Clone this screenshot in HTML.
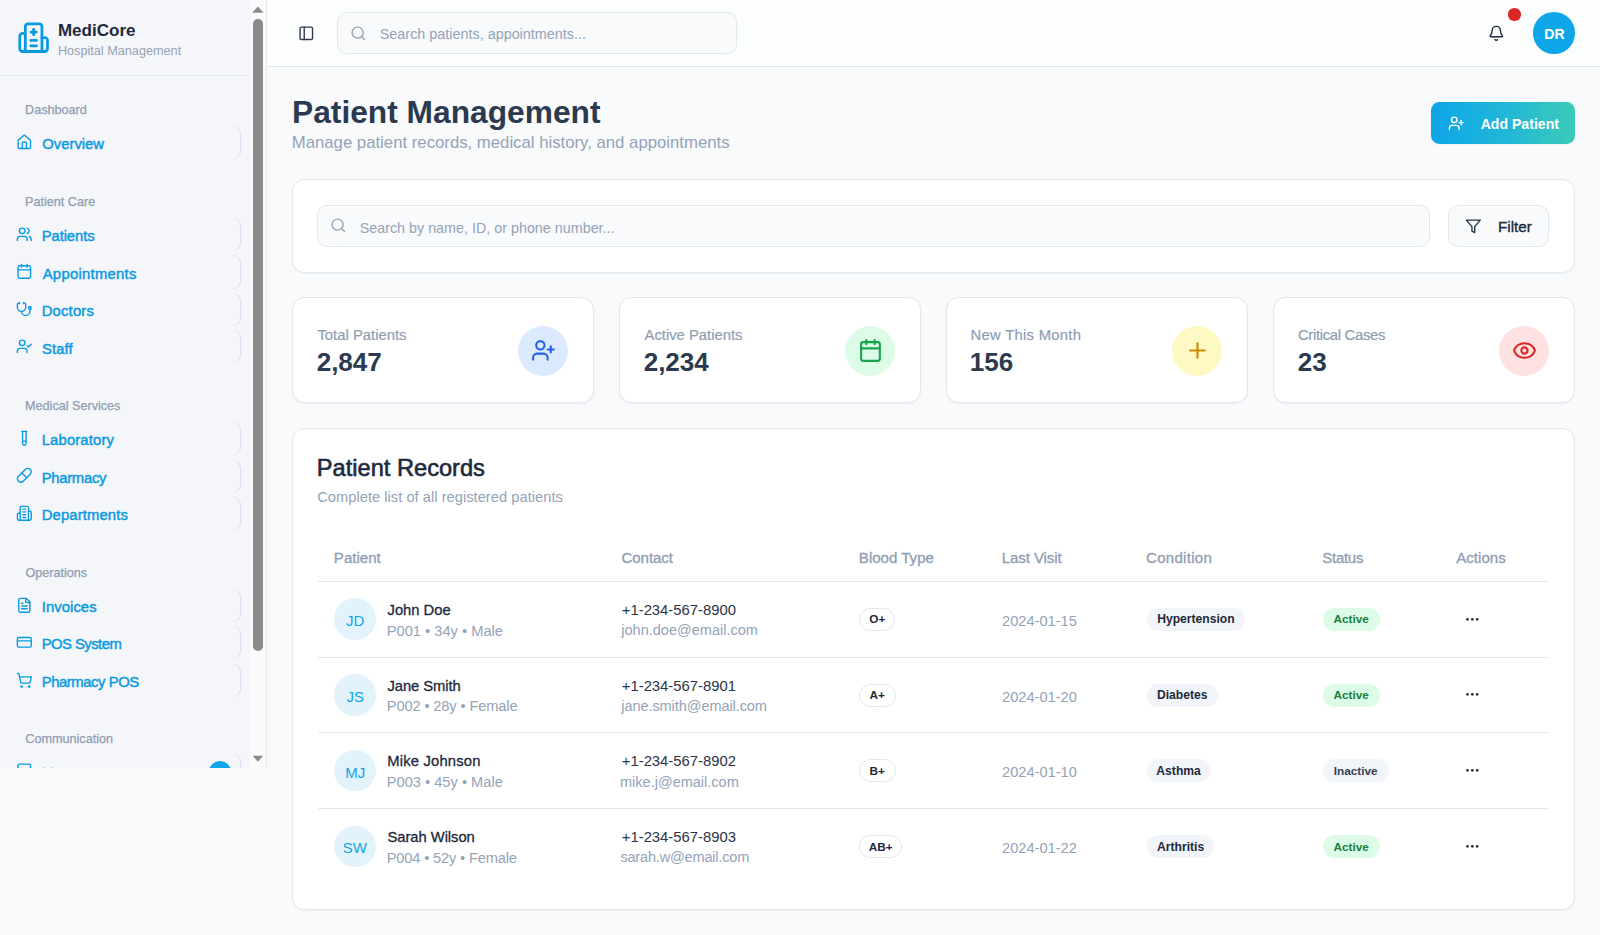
<!DOCTYPE html><html><head><meta charset="utf-8"><title>MediCore - Patient Management</title><style>
html,body{margin:0;padding:0}body{width:1600px;height:935px;overflow:hidden;position:relative;background:#f8fafc;font-family:'Liberation Sans',sans-serif}
.t{position:absolute;line-height:1;white-space:nowrap;font-family:'Liberation Sans',sans-serif}
</style></head><body>
<div style="position:absolute;left:0.00px;top:0.00px;width:250.00px;height:768.00px;background:#f5f6fa"></div>
<div style="position:absolute;left:250.00px;top:0.00px;width:16.00px;height:768.00px;background:#fafafa"></div>
<div style="position:absolute;left:266.00px;top:0.00px;width:1.04px;height:768.00px;background:#e2e8f0"></div>
<div style="position:absolute;left:0.00px;top:75.00px;width:250.00px;height:1.04px;background:#e2e8f0"></div>
<div style="position:absolute;left:253.00px;top:18.90px;width:9.70px;height:632.00px;background:#8a8a8a;border-radius:4.85px"></div>
<svg style="position:absolute;left:0;top:0" width="270" height="770"><polygon points="252.2,12.7 263.5,12.7 257.85,6.5" fill="#8a8a8a"/><polygon points="252.6,755.8 263.2,755.8 257.9,761.7" fill="#8a8a8a"/></svg>
<svg style="position:absolute;left:16.60px;top:20.50px" width="33.28" height="33.28" viewBox="0 0 24 24" fill="none" stroke="#0a9ae0" stroke-width="2" stroke-linecap="round" stroke-linejoin="round"><path d="M12 6v4"/><path d="M14 14h-4"/><path d="M14 18h-4"/><path d="M14 8h-4"/><path d="M18 12h2a2 2 0 0 1 2 2v6a2 2 0 0 1-2 2H4a2 2 0 0 1-2-2v-9a2 2 0 0 1 2-2h2"/><path d="M18 22V4a2 2 0 0 0-2-2H8a2 2 0 0 0-2 2v18"/></svg>
<span class="t" style="left:57.940px;top:22.000px;font-size:17.025px;font-weight:700;color:#1e293b;">MediCore</span>
<span class="t" style="left:57.917px;top:45.000px;font-size:12.686px;font-weight:400;color:#94a3b8;">Hospital Management</span>
<div style="position:absolute;left:0;top:0;width:250px;height:768px;overflow:hidden">
<span class="t" style="left:25.018px;top:104.000px;font-size:12.632px;font-weight:400;color:#8f9db2;-webkit-text-stroke:0.25px #8f9db2;">Dashboard</span>
<span class="t" style="left:25.018px;top:196.000px;font-size:12.632px;font-weight:400;color:#8f9db2;-webkit-text-stroke:0.25px #8f9db2;">Patient Care</span>
<span class="t" style="left:25.018px;top:400.000px;font-size:12.632px;font-weight:400;color:#8f9db2;-webkit-text-stroke:0.25px #8f9db2;">Medical Services</span>
<span class="t" style="left:25.410px;top:567.000px;font-size:12.632px;font-weight:400;color:#8f9db2;-webkit-text-stroke:0.25px #8f9db2;">Operations</span>
<span class="t" style="left:25.311px;top:733.000px;font-size:12.632px;font-weight:400;color:#8f9db2;-webkit-text-stroke:0.25px #8f9db2;">Communication</span>
<div style="position:absolute;left:-40px;top:126.15px;width:280.2px;height:33.1px;border-radius:8.5px;box-shadow:1.2px 0 0 #dbe2ea;"></div>
<svg style="position:absolute;left:16.40px;top:134.10px" width="16.64" height="16.64" viewBox="0 0 24 24" fill="none" stroke="#0a9ae0" stroke-width="2" stroke-linecap="round" stroke-linejoin="round"><path d="M15 21v-8a1 1 0 0 0-1-1h-4a1 1 0 0 0-1 1v8"/><path d="M3 10a2 2 0 0 1 .709-1.528l7-5.999a2 2 0 0 1 2.582 0l7 5.999A2 2 0 0 1 21 10v9a2 2 0 0 1-2 2H5a2 2 0 0 1-2-2z"/></svg>
<span class="t" style="left:42.254px;top:137.000px;font-size:14.847px;font-weight:400;color:#0a9ae0;-webkit-text-stroke:0.45px #0a9ae0;">Overview</span>
<div style="position:absolute;left:-40px;top:218.05px;width:280.2px;height:33.1px;border-radius:8.5px;box-shadow:1.2px 0 0 #dbe2ea;"></div>
<svg style="position:absolute;left:16.40px;top:226.00px" width="16.64" height="16.64" viewBox="0 0 24 24" fill="none" stroke="#0a9ae0" stroke-width="2" stroke-linecap="round" stroke-linejoin="round"><path d="M16 21v-2a4 4 0 0 0-4-4H6a4 4 0 0 0-4 4v2"/><circle cx="9" cy="7" r="4"/><path d="M22 21v-2a4 4 0 0 0-3-3.87"/><path d="M16 3.13a4 4 0 0 1 0 7.75"/></svg>
<span class="t" style="left:41.688px;top:229.000px;font-size:14.847px;font-weight:400;color:#0a9ae0;letter-spacing:-0.094px;-webkit-text-stroke:0.45px #0a9ae0;">Patients</span>
<div style="position:absolute;left:-40px;top:255.45px;width:280.2px;height:33.1px;border-radius:8.5px;box-shadow:1.2px 0 0 #dbe2ea;"></div>
<svg style="position:absolute;left:16.40px;top:263.40px" width="16.64" height="16.64" viewBox="0 0 24 24" fill="none" stroke="#0a9ae0" stroke-width="2" stroke-linecap="round" stroke-linejoin="round"><path d="M8 2v4"/><path d="M16 2v4"/><rect width="18" height="18" x="3" y="4" rx="2"/><path d="M3 10h18"/></svg>
<span class="t" style="left:42.700px;top:267.000px;font-size:14.847px;font-weight:400;color:#0a9ae0;letter-spacing:0.278px;-webkit-text-stroke:0.45px #0a9ae0;">Appointments</span>
<div style="position:absolute;left:-40px;top:292.85px;width:280.2px;height:33.1px;border-radius:8.5px;box-shadow:1.2px 0 0 #dbe2ea;"></div>
<svg style="position:absolute;left:16.40px;top:300.80px" width="16.64" height="16.64" viewBox="0 0 24 24" fill="none" stroke="#0a9ae0" stroke-width="2" stroke-linecap="round" stroke-linejoin="round"><path d="M11 2v2"/><path d="M5 2v2"/><path d="M5 3H4a2 2 0 0 0-2 2v4a6 6 0 0 0 12 0V5a2 2 0 0 0-2-2h-1"/><path d="M8 15a6 6 0 0 0 12 0v-3"/><circle cx="20" cy="10" r="2"/></svg>
<span class="t" style="left:41.680px;top:304.000px;font-size:14.847px;font-weight:400;color:#0a9ae0;letter-spacing:0.192px;-webkit-text-stroke:0.45px #0a9ae0;">Doctors</span>
<div style="position:absolute;left:-40px;top:330.25px;width:280.2px;height:33.1px;border-radius:8.5px;box-shadow:1.2px 0 0 #dbe2ea;"></div>
<svg style="position:absolute;left:16.40px;top:338.20px" width="16.64" height="16.64" viewBox="0 0 24 24" fill="none" stroke="#0a9ae0" stroke-width="2" stroke-linecap="round" stroke-linejoin="round"><path d="M16 21v-2a4 4 0 0 0-4-4H6a4 4 0 0 0-4 4v2"/><circle cx="9" cy="7" r="4"/><polyline points="16 11 18 13 22 9"/></svg>
<span class="t" style="left:42.089px;top:342.000px;font-size:14.847px;font-weight:400;color:#0a9ae0;letter-spacing:0.08px;-webkit-text-stroke:0.45px #0a9ae0;">Staff</span>
<div style="position:absolute;left:-40px;top:422.10px;width:280.2px;height:33.1px;border-radius:8.5px;box-shadow:1.2px 0 0 #dbe2ea;"></div>
<svg style="position:absolute;left:16.40px;top:430.05px" width="16.64" height="16.64" viewBox="0 0 24 24" fill="none" stroke="#0a9ae0" stroke-width="2" stroke-linecap="round" stroke-linejoin="round"><path d="M14.5 2v17.5c0 1.4-1.1 2.5-2.5 2.5c-1.4 0-2.5-1.1-2.5-2.5V2"/><path d="M8.5 2h7"/><path d="M14.5 16h-5"/></svg>
<span class="t" style="left:41.704px;top:433.000px;font-size:14.847px;font-weight:400;color:#0a9ae0;letter-spacing:0.149px;-webkit-text-stroke:0.45px #0a9ae0;">Laboratory</span>
<div style="position:absolute;left:-40px;top:459.50px;width:280.2px;height:33.1px;border-radius:8.5px;box-shadow:1.2px 0 0 #dbe2ea;"></div>
<svg style="position:absolute;left:16.40px;top:467.45px" width="16.64" height="16.64" viewBox="0 0 24 24" fill="none" stroke="#0a9ae0" stroke-width="2" stroke-linecap="round" stroke-linejoin="round"><path d="m10.5 20.5 10-10a4.95 4.95 0 1 0-7-7l-10 10a4.95 4.95 0 1 0 7 7Z"/><path d="m8.5 8.5 7 7"/></svg>
<span class="t" style="left:41.688px;top:471.000px;font-size:14.847px;font-weight:400;color:#0a9ae0;letter-spacing:-0.287px;-webkit-text-stroke:0.45px #0a9ae0;">Pharmacy</span>
<div style="position:absolute;left:-40px;top:496.90px;width:280.2px;height:33.1px;border-radius:8.5px;box-shadow:1.2px 0 0 #dbe2ea;"></div>
<svg style="position:absolute;left:16.40px;top:504.85px" width="16.64" height="16.64" viewBox="0 0 24 24" fill="none" stroke="#0a9ae0" stroke-width="2" stroke-linecap="round" stroke-linejoin="round"><path d="M6 22V4a2 2 0 0 1 2-2h8a2 2 0 0 1 2 2v18Z"/><path d="M6 12H4a2 2 0 0 0-2 2v6a2 2 0 0 0 2 2h2"/><path d="M18 9h2a2 2 0 0 1 2 2v9a2 2 0 0 1-2 2h-2"/><path d="M10 6h4"/><path d="M10 10h4"/><path d="M10 14h4"/><path d="M10 18h4"/></svg>
<span class="t" style="left:41.680px;top:508.000px;font-size:14.847px;font-weight:400;color:#0a9ae0;letter-spacing:0.129px;-webkit-text-stroke:0.45px #0a9ae0;">Departments</span>
<div style="position:absolute;left:-40px;top:588.75px;width:280.2px;height:33.1px;border-radius:8.5px;box-shadow:1.2px 0 0 #dbe2ea;"></div>
<svg style="position:absolute;left:16.40px;top:596.70px" width="16.64" height="16.64" viewBox="0 0 24 24" fill="none" stroke="#0a9ae0" stroke-width="2" stroke-linecap="round" stroke-linejoin="round"><path d="M15 2H6a2 2 0 0 0-2 2v16a2 2 0 0 0 2 2h12a2 2 0 0 0 2-2V7Z"/><path d="M14 2v4a2 2 0 0 0 2 2h4"/><path d="M10 9H8"/><path d="M16 13H8"/><path d="M16 17H8"/></svg>
<span class="t" style="left:41.864px;top:600.000px;font-size:14.847px;font-weight:400;color:#0a9ae0;letter-spacing:0.042px;-webkit-text-stroke:0.45px #0a9ae0;">Invoices</span>
<div style="position:absolute;left:-40px;top:626.15px;width:280.2px;height:33.1px;border-radius:8.5px;box-shadow:1.2px 0 0 #dbe2ea;"></div>
<svg style="position:absolute;left:16.40px;top:634.10px" width="16.64" height="16.64" viewBox="0 0 24 24" fill="none" stroke="#0a9ae0" stroke-width="2" stroke-linecap="round" stroke-linejoin="round"><rect width="20" height="14" x="2" y="5" rx="2"/><line x1="2" x2="22" y1="10" y2="10"/></svg>
<span class="t" style="left:41.688px;top:637.000px;font-size:14.847px;font-weight:400;color:#0a9ae0;letter-spacing:-0.533px;-webkit-text-stroke:0.45px #0a9ae0;">POS System</span>
<div style="position:absolute;left:-40px;top:663.55px;width:280.2px;height:33.1px;border-radius:8.5px;box-shadow:1.2px 0 0 #dbe2ea;"></div>
<svg style="position:absolute;left:16.40px;top:671.50px" width="16.64" height="16.64" viewBox="0 0 24 24" fill="none" stroke="#0a9ae0" stroke-width="2" stroke-linecap="round" stroke-linejoin="round"><circle cx="8" cy="21" r="1"/><circle cx="19" cy="21" r="1"/><path d="M2.05 2.05h2l2.66 12.42a2 2 0 0 0 2 1.58h9.78a2 2 0 0 0 1.95-1.57l1.65-7.43H5.12"/></svg>
<span class="t" style="left:41.688px;top:675.000px;font-size:14.847px;font-weight:400;color:#0a9ae0;letter-spacing:-0.425px;-webkit-text-stroke:0.45px #0a9ae0;">Pharmacy POS</span>
<div style="position:absolute;left:-40px;top:754.20px;width:280.2px;height:33.1px;border-radius:8.5px;box-shadow:1.2px 0 0 #dbe2ea;"></div>
<svg style="position:absolute;left:16.40px;top:762.15px" width="16.64" height="16.64" viewBox="0 0 24 24" fill="none" stroke="#0a9ae0" stroke-width="2" stroke-linecap="round" stroke-linejoin="round"><path d="M21 15a2 2 0 0 1-2 2H7l-4 4V5a2 2 0 0 1 2-2h14a2 2 0 0 1 2 2z"/></svg>
<span class="t" style="left:41.688px;top:766.000px;font-size:14.847px;font-weight:400;color:#0a9ae0;-webkit-text-stroke:0.45px #0a9ae0;">Messages</span>
<div style="position:absolute;left:208.7px;top:760.60px;width:22px;height:22px;border-radius:11px;background:#0ea5e9"></div>
</div>
<div style="position:absolute;left:267.04px;top:0.00px;width:1332.96px;height:66.00px;background:#fcfdfd"></div>
<div style="position:absolute;left:267.04px;top:66.00px;width:1332.96px;height:1.04px;background:#e2e8f0"></div>
<svg style="position:absolute;left:298.20px;top:25.06px" width="16.64" height="16.64" viewBox="0 0 24 24" fill="none" stroke="#2f3b4f" stroke-width="2" stroke-linecap="round" stroke-linejoin="round"><rect width="18" height="18" x="3" y="3" rx="2"/><path d="M9 3v18"/></svg>
<div style="position:absolute;left:336.90px;top:12.48px;width:400.40px;height:41.60px;box-sizing:border-box;background:#f8fafc;border:1.04px solid #e2e8f0;border-radius:10px"></div>
<svg style="position:absolute;left:350.20px;top:24.80px" width="16.64" height="16.64" viewBox="0 0 24 24" fill="none" stroke="#94a3b8" stroke-width="2" stroke-linecap="round" stroke-linejoin="round"><circle cx="11" cy="11" r="8"/><path d="m21 21-4.3-4.3"/></svg>
<span class="t" style="left:379.773px;top:27.000px;font-size:14.398px;font-weight:400;color:#94a3b8;">Search patients, appointments...</span>
<svg style="position:absolute;left:1487.50px;top:25.16px" width="16.64" height="16.64" viewBox="0 0 24 24" fill="none" stroke="#1e293b" stroke-width="2" stroke-linecap="round" stroke-linejoin="round"><path d="M10.268 21a2 2 0 0 0 3.464 0"/><path d="M3.262 15.326A1 1 0 0 0 4 17h16a1 1 0 0 0 .74-1.673C19.41 13.956 18 12.499 18 8A6 6 0 0 0 6 8c0 4.499-1.411 5.956-2.738 7.326"/></svg>
<div style="position:absolute;left:1508.25px;top:8.2px;width:12.48px;height:12.48px;border-radius:50%;background:#dc2626"></div>
<div style="position:absolute;left:1533.4px;top:12.4px;width:41.6px;height:41.6px;border-radius:50%;background:#0ea5e9"></div>
<span class="t" style="left:1544.321px;top:27.000px;font-size:14.033px;font-weight:700;color:#ffffff;">DR</span>
<span class="t" style="left:292.044px;top:97.000px;font-size:31.732px;font-weight:700;color:#2c3a4f;">Patient Management</span>
<span class="t" style="left:291.744px;top:135.000px;font-size:16.744px;font-weight:400;color:#94a3b8;">Manage patient records, medical history, and appointments</span>
<div style="position:absolute;left:1430.60px;top:102.40px;width:144.44px;height:41.60px;background:linear-gradient(90deg,#0ea5e9 0%,#22b8d6 55%,#3ccbb8 100%);border-radius:8.32px;box-shadow:0 1px 2px rgba(0,0,0,.05)"></div>
<svg style="position:absolute;left:1447.50px;top:115.20px" width="16.64" height="16.64" viewBox="0 0 24 24" fill="none" stroke="#ffffff" stroke-width="2" stroke-linecap="round" stroke-linejoin="round"><path d="M16 21v-2a4 4 0 0 0-4-4H6a4 4 0 0 0-4 4v2"/><circle cx="9" cy="7" r="4"/><line x1="19" x2="19" y1="8" y2="14"/><line x1="22" x2="16" y1="11" y2="11"/></svg>
<span class="t" style="left:1480.713px;top:117.000px;font-size:14.09px;font-weight:700;color:#ffffff;">Add Patient</span>
<div style="position:absolute;left:291.60px;top:179.00px;width:1283.44px;height:94.00px;box-sizing:border-box;background:#fff;border:1.04px solid #e2e8f0;border-radius:12.48px;box-shadow:0 1px 2px 0 rgba(0,0,0,.05)"></div>
<div style="position:absolute;left:317.20px;top:205.30px;width:1113.10px;height:41.60px;box-sizing:border-box;background:#f8fafc;border:1.04px solid #e2e8f0;border-radius:10px"></div>
<svg style="position:absolute;left:329.50px;top:217.10px" width="16.64" height="16.64" viewBox="0 0 24 24" fill="none" stroke="#94a3b8" stroke-width="2" stroke-linecap="round" stroke-linejoin="round"><circle cx="11" cy="11" r="8"/><path d="m21 21-4.3-4.3"/></svg>
<span class="t" style="left:359.657px;top:221.000px;font-size:14.347px;font-weight:400;color:#94a3b8;">Search by name, ID, or phone number...</span>
<div style="position:absolute;left:1447.60px;top:205.30px;width:101.00px;height:41.60px;box-sizing:border-box;background:#f8fafc;border:1.04px solid #e2e8f0;border-radius:10px"></div>
<svg style="position:absolute;left:1465.30px;top:218.20px" width="16.64" height="16.64" viewBox="0 0 24 24" fill="none" stroke="#283548" stroke-width="2" stroke-linecap="round" stroke-linejoin="round"><polygon points="22 3 2 3 10 12.46 10 19 14 21 14 12.46 22 3"/></svg>
<span class="t" style="left:1498.024px;top:219.000px;font-size:15.217px;font-weight:400;color:#1e293b;-webkit-text-stroke:0.35px #1e293b;">Filter</span>
<div style="position:absolute;left:291.60px;top:297.40px;width:302.24px;height:105.70px;box-sizing:border-box;background:#fff;border:1.04px solid #e2e8f0;border-radius:12.48px;box-shadow:0 1px 2px 0 rgba(0,0,0,.05)"></div>
<span class="t" style="left:317.442px;top:328.000px;font-size:14.833px;font-weight:400;color:#8f9db2;-webkit-text-stroke:0.2px #8f9db2;">Total Patients</span>
<span class="t" style="left:316.643px;top:349.000px;font-size:26.05px;font-weight:700;color:#2c3a4f;">2,847</span>
<div style="position:absolute;left:518.48px;top:325.84px;width:49.92px;height:49.92px;border-radius:50%;background:#dbeafe"></div>
<svg style="position:absolute;left:530.96px;top:338.32px" width="24.96" height="24.96" viewBox="0 0 24 24" fill="none" stroke="#2563eb" stroke-width="2" stroke-linecap="round" stroke-linejoin="round"><path d="M16 21v-2a4 4 0 0 0-4-4H6a4 4 0 0 0-4 4v2"/><circle cx="9" cy="7" r="4"/><line x1="19" x2="19" y1="8" y2="14"/><line x1="22" x2="16" y1="11" y2="11"/></svg>
<div style="position:absolute;left:618.60px;top:297.40px;width:302.24px;height:105.70px;box-sizing:border-box;background:#fff;border:1.04px solid #e2e8f0;border-radius:12.48px;box-shadow:0 1px 2px 0 rgba(0,0,0,.05)"></div>
<span class="t" style="left:644.501px;top:328.000px;font-size:14.833px;font-weight:400;color:#8f9db2;letter-spacing:-0.012px;-webkit-text-stroke:0.2px #8f9db2;">Active Patients</span>
<span class="t" style="left:643.643px;top:349.000px;font-size:26.05px;font-weight:700;color:#2c3a4f;">2,234</span>
<div style="position:absolute;left:845.48px;top:325.84px;width:49.92px;height:49.92px;border-radius:50%;background:#dcfce7"></div>
<svg style="position:absolute;left:857.96px;top:338.32px" width="24.96" height="24.96" viewBox="0 0 24 24" fill="none" stroke="#16a34a" stroke-width="2" stroke-linecap="round" stroke-linejoin="round"><path d="M8 2v4"/><path d="M16 2v4"/><rect width="18" height="18" x="3" y="4" rx="2"/><path d="M3 10h18"/></svg>
<div style="position:absolute;left:945.60px;top:297.40px;width:302.24px;height:105.70px;box-sizing:border-box;background:#fff;border:1.04px solid #e2e8f0;border-radius:12.48px;box-shadow:0 1px 2px 0 rgba(0,0,0,.05)"></div>
<span class="t" style="left:970.522px;top:328.000px;font-size:14.833px;font-weight:400;color:#8f9db2;letter-spacing:0.275px;-webkit-text-stroke:0.2px #8f9db2;">New This Month</span>
<span class="t" style="left:969.823px;top:349.000px;font-size:26.05px;font-weight:700;color:#2c3a4f;">156</span>
<div style="position:absolute;left:1172.48px;top:325.84px;width:49.92px;height:49.92px;border-radius:50%;background:#fef9c3"></div>
<svg style="position:absolute;left:1184.96px;top:338.32px" width="24.96" height="24.96" viewBox="0 0 24 24" fill="none" stroke="#ca8a04" stroke-width="2" stroke-linecap="round" stroke-linejoin="round"><path d="M5 12h14"/><path d="M12 5v14"/></svg>
<div style="position:absolute;left:1272.60px;top:297.40px;width:302.24px;height:105.70px;box-sizing:border-box;background:#fff;border:1.04px solid #e2e8f0;border-radius:12.48px;box-shadow:0 1px 2px 0 rgba(0,0,0,.05)"></div>
<span class="t" style="left:1297.976px;top:328.000px;font-size:14.833px;font-weight:400;color:#8f9db2;letter-spacing:-0.314px;-webkit-text-stroke:0.2px #8f9db2;">Critical Cases</span>
<span class="t" style="left:1297.643px;top:349.000px;font-size:26.05px;font-weight:700;color:#2c3a4f;">23</span>
<div style="position:absolute;left:1499.48px;top:325.84px;width:49.92px;height:49.92px;border-radius:50%;background:#fee2e2"></div>
<svg style="position:absolute;left:1511.96px;top:338.32px" width="24.96" height="24.96" viewBox="0 0 24 24" fill="none" stroke="#dc2626" stroke-width="2" stroke-linecap="round" stroke-linejoin="round"><path d="M2.062 12.348a1 1 0 0 1 0-.696 10.75 10.75 0 0 1 19.876 0 1 1 0 0 1 0 .696 10.75 10.75 0 0 1-19.876 0"/><circle cx="12" cy="12" r="3"/></svg>
<div style="position:absolute;left:291.60px;top:427.80px;width:1283.44px;height:482.20px;box-sizing:border-box;background:#fff;border:1.04px solid #e2e8f0;border-radius:12.48px;box-shadow:0 1px 2px 0 rgba(0,0,0,.05)"></div>
<span class="t" style="left:316.820px;top:457.000px;font-size:23.642px;font-weight:400;color:#1e293b;-webkit-text-stroke:0.6px #1e293b;">Patient Records</span>
<span class="t" style="left:317.182px;top:490.000px;font-size:14.742px;font-weight:400;color:#94a3b8;">Complete list of all registered patients</span>
<span class="t" style="left:333.851px;top:550.000px;font-size:15.073px;font-weight:400;color:#8f9db2;-webkit-text-stroke:0.3px #8f9db2;">Patient</span>
<span class="t" style="left:621.441px;top:550.000px;font-size:15.073px;font-weight:400;color:#8f9db2;letter-spacing:-0.063px;-webkit-text-stroke:0.3px #8f9db2;">Contact</span>
<span class="t" style="left:858.851px;top:550.000px;font-size:15.073px;font-weight:400;color:#8f9db2;letter-spacing:-0.004px;-webkit-text-stroke:0.3px #8f9db2;">Blood Type</span>
<span class="t" style="left:1001.851px;top:550.000px;font-size:15.073px;font-weight:400;color:#8f9db2;letter-spacing:-0.122px;-webkit-text-stroke:0.3px #8f9db2;">Last Visit</span>
<span class="t" style="left:1146.018px;top:550.000px;font-size:15.073px;font-weight:400;color:#8f9db2;letter-spacing:0.271px;-webkit-text-stroke:0.3px #8f9db2;">Condition</span>
<span class="t" style="left:1322.275px;top:550.000px;font-size:15.073px;font-weight:400;color:#8f9db2;letter-spacing:-0.3px;-webkit-text-stroke:0.3px #8f9db2;">Status</span>
<span class="t" style="left:1456.282px;top:550.000px;font-size:15.073px;font-weight:400;color:#8f9db2;letter-spacing:0.004px;-webkit-text-stroke:0.3px #8f9db2;">Actions</span>
<div style="position:absolute;left:317.80px;top:580.80px;width:1231.40px;height:1.04px;background:#e2e8f0"></div>
<div style="position:absolute;left:317.80px;top:656.53px;width:1231.40px;height:1.04px;background:#e2e8f0"></div>
<div style="position:absolute;left:334.3px;top:598.39px;width:41.6px;height:41.6px;border-radius:50%;background:#e3f3fc"></div>
<span class="t" style="left:346.106px;top:613.000px;font-size:15.0px;font-weight:400;color:#0ea5e9;">JD</span>
<span class="t" style="left:387.515px;top:603.000px;font-size:14.781px;font-weight:400;color:#1e293b;-webkit-text-stroke:0.3px #1e293b;">John Doe</span>
<span class="t" style="left:386.778px;top:624.000px;font-size:14.668px;font-weight:400;color:#94a3b8;">P001 • 34y • Male</span>
<span class="t" style="left:621.786px;top:603.000px;font-size:14.843px;font-weight:400;color:#2a3547;">+1-234-567-8900</span>
<span class="t" style="left:621.290px;top:623.000px;font-size:14.529px;font-weight:400;color:#94a3b8;">john.doe@email.com</span>
<div style="position:absolute;box-sizing:border-box;left:859.3px;top:607.99px;width:36px;height:22.9px;border-radius:12px;border:1.04px solid #e2e8f0;background:#fff"></div>
<span class="t" style="left:869.237px;top:613.000px;font-size:11.788px;font-weight:700;color:#1e293b;">O+</span>
<span class="t" style="left:1002.031px;top:614.000px;font-size:14.631px;font-weight:400;color:#94a3b8;">2024-01-15</span>
<div style="position:absolute;left:1146.7px;top:607.99px;width:98.4px;height:22.9px;border-radius:12px;background:#f1f5f9"></div>
<span class="t" style="left:1157.181px;top:613.000px;font-size:12.148px;font-weight:700;color:#1e293b;">Hypertension</span>
<div style="position:absolute;left:1322.6px;top:607.99px;width:57.3px;height:22.9px;border-radius:12px;background:#dcfce7"></div>
<span class="t" style="left:1333.545px;top:613.000px;font-size:11.788px;font-weight:700;color:#15803d;">Active</span>
<svg style="position:absolute;left:1464.20px;top:610.67px" width="16.64" height="16.64" viewBox="0 0 24 24" fill="none" stroke="#1e293b" stroke-width="2" stroke-linecap="round" stroke-linejoin="round"><circle cx="12" cy="12" r="1"/><circle cx="19" cy="12" r="1"/><circle cx="5" cy="12" r="1"/></svg>
<div style="position:absolute;left:317.80px;top:732.26px;width:1231.40px;height:1.04px;background:#e2e8f0"></div>
<div style="position:absolute;left:334.3px;top:674.12px;width:41.6px;height:41.6px;border-radius:50%;background:#e3f3fc"></div>
<span class="t" style="left:346.546px;top:689.000px;font-size:15.0px;font-weight:400;color:#0ea5e9;">JS</span>
<span class="t" style="left:387.515px;top:679.000px;font-size:14.781px;font-weight:400;color:#1e293b;letter-spacing:-0.081px;-webkit-text-stroke:0.3px #1e293b;">Jane Smith</span>
<span class="t" style="left:386.778px;top:699.000px;font-size:14.668px;font-weight:400;color:#94a3b8;letter-spacing:-0.136px;">P002 • 28y • Female</span>
<span class="t" style="left:621.786px;top:679.000px;font-size:14.843px;font-weight:400;color:#2a3547;">+1-234-567-8901</span>
<span class="t" style="left:621.290px;top:699.000px;font-size:14.529px;font-weight:400;color:#94a3b8;letter-spacing:-0.072px;">jane.smith@email.com</span>
<div style="position:absolute;box-sizing:border-box;left:859.3px;top:683.72px;width:36.25px;height:22.9px;border-radius:12px;border:1.04px solid #e2e8f0;background:#fff"></div>
<span class="t" style="left:869.577px;top:689.000px;font-size:11.788px;font-weight:700;color:#1e293b;">A+</span>
<span class="t" style="left:1002.031px;top:690.000px;font-size:14.631px;font-weight:400;color:#94a3b8;">2024-01-20</span>
<div style="position:absolute;left:1146.7px;top:683.72px;width:71.25px;height:22.9px;border-radius:12px;background:#f1f5f9"></div>
<span class="t" style="left:1156.994px;top:689.000px;font-size:12.148px;font-weight:700;color:#1e293b;">Diabetes</span>
<div style="position:absolute;left:1322.6px;top:683.72px;width:57.3px;height:22.9px;border-radius:12px;background:#dcfce7"></div>
<span class="t" style="left:1333.545px;top:689.000px;font-size:11.788px;font-weight:700;color:#15803d;">Active</span>
<svg style="position:absolute;left:1464.20px;top:686.40px" width="16.64" height="16.64" viewBox="0 0 24 24" fill="none" stroke="#1e293b" stroke-width="2" stroke-linecap="round" stroke-linejoin="round"><circle cx="12" cy="12" r="1"/><circle cx="19" cy="12" r="1"/><circle cx="5" cy="12" r="1"/></svg>
<div style="position:absolute;left:317.80px;top:807.99px;width:1231.40px;height:1.04px;background:#e2e8f0"></div>
<div style="position:absolute;left:334.3px;top:749.85px;width:41.6px;height:41.6px;border-radius:50%;background:#e3f3fc"></div>
<span class="t" style="left:345.340px;top:765.000px;font-size:15.0px;font-weight:400;color:#0ea5e9;">MJ</span>
<span class="t" style="left:387.167px;top:754.000px;font-size:14.781px;font-weight:400;color:#1e293b;letter-spacing:0.199px;-webkit-text-stroke:0.3px #1e293b;">Mike Johnson</span>
<span class="t" style="left:386.778px;top:775.000px;font-size:14.668px;font-weight:400;color:#94a3b8;letter-spacing:-0.006px;">P003 • 45y • Male</span>
<span class="t" style="left:621.786px;top:754.000px;font-size:14.843px;font-weight:400;color:#2a3547;">+1-234-567-8902</span>
<span class="t" style="left:620.005px;top:775.000px;font-size:14.529px;font-weight:400;color:#94a3b8;letter-spacing:-0.002px;">mike.j@email.com</span>
<div style="position:absolute;box-sizing:border-box;left:859.3px;top:759.45px;width:36.25px;height:22.9px;border-radius:12px;border:1.04px solid #e2e8f0;background:#fff"></div>
<span class="t" style="left:869.527px;top:765.000px;font-size:11.788px;font-weight:700;color:#1e293b;">B+</span>
<span class="t" style="left:1002.031px;top:765.000px;font-size:14.631px;font-weight:400;color:#94a3b8;">2024-01-10</span>
<div style="position:absolute;left:1146.7px;top:759.45px;width:64.5px;height:22.9px;border-radius:12px;background:#f1f5f9"></div>
<span class="t" style="left:1156.373px;top:765.000px;font-size:12.148px;font-weight:700;color:#1e293b;">Asthma</span>
<div style="position:absolute;left:1322.6px;top:759.45px;width:66.3px;height:22.9px;border-radius:12px;background:#f1f5f9"></div>
<span class="t" style="left:1333.680px;top:765.000px;font-size:11.788px;font-weight:700;color:#334155;">Inactive</span>
<svg style="position:absolute;left:1464.20px;top:762.13px" width="16.64" height="16.64" viewBox="0 0 24 24" fill="none" stroke="#1e293b" stroke-width="2" stroke-linecap="round" stroke-linejoin="round"><circle cx="12" cy="12" r="1"/><circle cx="19" cy="12" r="1"/><circle cx="5" cy="12" r="1"/></svg>
<div style="position:absolute;left:334.3px;top:825.58px;width:41.6px;height:41.6px;border-radius:50%;background:#e3f3fc"></div>
<span class="t" style="left:342.765px;top:840.000px;font-size:15.0px;font-weight:400;color:#0ea5e9;">SW</span>
<span class="t" style="left:387.483px;top:830.000px;font-size:14.781px;font-weight:400;color:#1e293b;letter-spacing:-0.04px;-webkit-text-stroke:0.3px #1e293b;">Sarah Wilson</span>
<span class="t" style="left:386.778px;top:851.000px;font-size:14.668px;font-weight:400;color:#94a3b8;letter-spacing:-0.169px;">P004 • 52y • Female</span>
<span class="t" style="left:621.786px;top:830.000px;font-size:14.843px;font-weight:400;color:#2a3547;">+1-234-567-8903</span>
<span class="t" style="left:620.384px;top:850.000px;font-size:14.529px;font-weight:400;color:#94a3b8;letter-spacing:-0.171px;">sarah.w@email.com</span>
<div style="position:absolute;box-sizing:border-box;left:859.3px;top:835.18px;width:42.75px;height:22.9px;border-radius:12px;border:1.04px solid #e2e8f0;background:#fff"></div>
<span class="t" style="left:868.747px;top:841.000px;font-size:11.788px;font-weight:700;color:#1e293b;">AB+</span>
<span class="t" style="left:1002.031px;top:841.000px;font-size:14.631px;font-weight:400;color:#94a3b8;">2024-01-22</span>
<div style="position:absolute;left:1146.7px;top:835.18px;width:67.75px;height:22.9px;border-radius:12px;background:#f1f5f9"></div>
<span class="t" style="left:1157.009px;top:841.000px;font-size:12.148px;font-weight:700;color:#1e293b;">Arthritis</span>
<div style="position:absolute;left:1322.6px;top:835.18px;width:57.3px;height:22.9px;border-radius:12px;background:#dcfce7"></div>
<span class="t" style="left:1333.545px;top:841.000px;font-size:11.788px;font-weight:700;color:#15803d;">Active</span>
<svg style="position:absolute;left:1464.20px;top:837.86px" width="16.64" height="16.64" viewBox="0 0 24 24" fill="none" stroke="#1e293b" stroke-width="2" stroke-linecap="round" stroke-linejoin="round"><circle cx="12" cy="12" r="1"/><circle cx="19" cy="12" r="1"/><circle cx="5" cy="12" r="1"/></svg>
</body></html>
